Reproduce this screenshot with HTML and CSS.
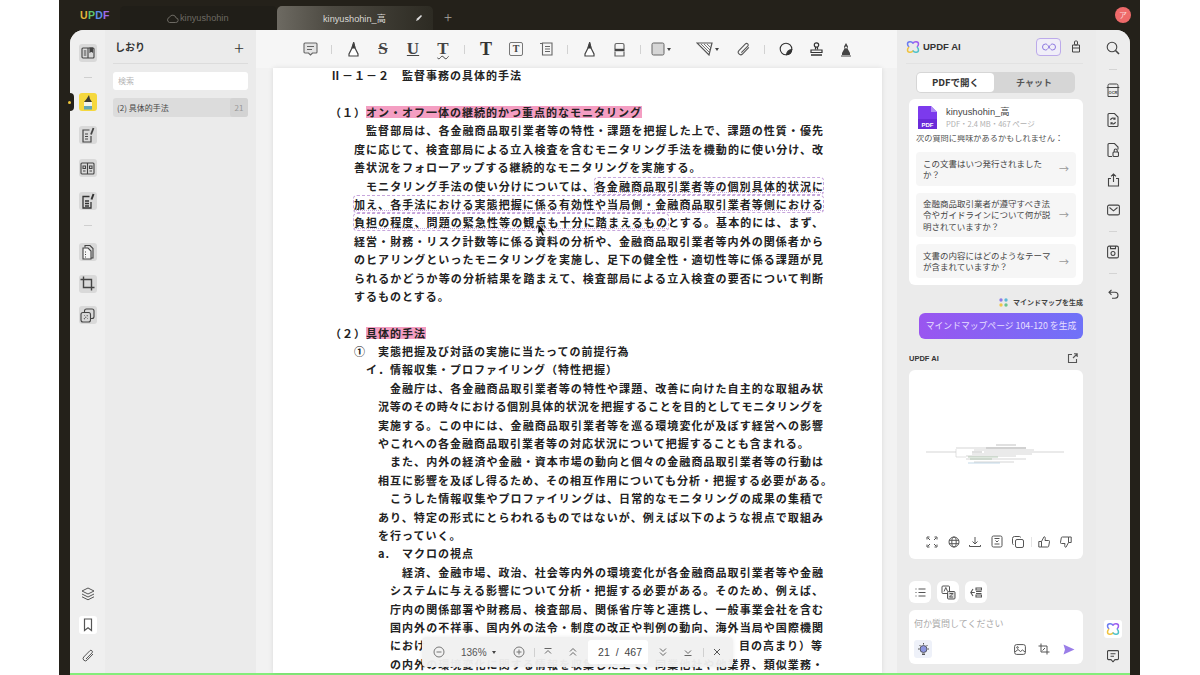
FILE: index.html
```html
<!DOCTYPE html>
<html lang="ja">
<head>
  <meta charset="UTF-8">
  <title>UPDF</title>
  <link rel="stylesheet" href="styles.css">
</head>
<body>
<div class="window">

  <div class="titlebar">
    <div class="logo"><span class="l-u">U</span><span class="l-p">P</span><span class="l-d">D</span><span class="l-f">F</span></div>
    <div class="tab tab-off">
      <svg width="13" height="11" viewBox="0 0 13 11" fill="none" stroke="#6d6a63" stroke-width="1"><path d="M3.5 9.5h6.2a2.3 2.3 0 0 0 .3-4.6A3.4 3.4 0 0 0 3.500 4.300 2.700 2.700 0 0 0 3.500 9.500z"/></svg>
      <span>kinyushohin</span>
    </div>
    <div class="tab tab-on">
      <span>kinyushohin_高</span>
      <svg class="tab-pen" width="8" height="8" viewBox="0 0 8 8"><path d="M1 7l1-2.500L6 1l1 1-3.500 4z" fill="#ddd"/></svg>
    </div>
    <div class="tab-add">+</div>
    <div class="avatar">ア</div>
  </div>

  <div class="main">

    <div class="rail">
      <div class="notch"><i></i></div>
      <div class="rail-top">
        <div class="rbtn on"><svg width="14" height="14" viewBox="0 0 14 14" fill="none" stroke="#444" stroke-width="1.100"><rect x="1" y="2" width="12" height="10" rx="1"/><path d="M7 2v10M2.800 5h2.500M2.800 7h2.500M2.800 9h2.500"/><path d="M9 2h2.500v4L10.200 5 9 6z" fill="#444"/></svg></div>
        <div class="rsep"></div>
        <div class="rbtn yellow"><svg width="14" height="16" viewBox="0 0 14 16"><path d="M5.500 5L8 1l1 4 2 3H3z" fill="#3a3a33"/><rect x="3" y="8" width="8" height="4" fill="#f4f4ea"/><rect x="3" y="12" width="8" height="3.500" fill="#62a6b8"/></svg></div>
        <div class="rbtn on"><svg width="14" height="16" viewBox="0 0 14 16" fill="none" stroke="#444" stroke-width="1.200"><path d="M8.500 3H2v12h8V9"/><path d="M4 7h3M4 9.500h3M4 12h3"/><path d="M12.500 1L10 7.500" stroke-width="1.800"/></svg></div>
        <div class="rbtn on"><svg width="15" height="13" viewBox="0 0 15 13" fill="none" stroke="#444" stroke-width="1.100"><rect x="1" y="1" width="13" height="11" rx="1"/><path d="M7.500 1v11M3 4h2.500v2.500H3zM9.500 4H12v2.500H9.500zM3 9h2.500M9.500 9H12"/></svg></div>
        <div class="rbtn on"><svg width="14" height="16" viewBox="0 0 14 16" fill="none" stroke="#333" stroke-width="1.300"><path d="M8.500 3.500H2V15h8V9"/><path d="M4 8h4M4 10.500h4M4 13h4" stroke-width="1.600"/><path d="M12.500 1L10.500 6.500" stroke-width="2"/></svg></div>
        <div class="rsep"></div>
      </div>
      <div class="rail-mid">
        <div class="rbtn on"><svg width="14" height="16" viewBox="0 0 14 16" fill="none" stroke="#444" stroke-width="1.100"><path d="M4 3.500V1.500h5l3 3V14h-2"/><path d="M2 4h5l3 3v8H2z" fill="#f6f6f6"/><path d="M4 8h1M4 10.500h1M4 13h1"/></svg></div>
        <div class="rbtn on"><svg width="15" height="15" viewBox="0 0 15 15" fill="none" stroke="#444" stroke-width="1.400"><path d="M3.500 0.500V11.500H14.500"/><path d="M0.500 3.500H11.500V14.500"/></svg></div>
        <div class="rbtn on"><svg width="15" height="15" viewBox="0 0 15 15" fill="none" stroke="#444" stroke-width="1.100"><rect x="4.500" y="1" width="9.500" height="9.500" rx="2"/><rect x="1" y="4.500" width="9.500" height="9.500" rx="2" fill="#d8d8d8"/><path d="M4 11l4-4M4.500 7.500h.5M7.500 10.500h.5" stroke-dasharray="1 1"/></svg></div>
      </div>
      <div class="rail-bottom">
        <div class="rbtn"><svg width="14" height="14" viewBox="0 0 14 14" fill="none" stroke="#555" stroke-width="1"><path d="M7 1l6 3-6 3-6-3z"/><path d="M1 7l6 3 6-3M1 9.800l6 3 6-3"/></svg></div>
        <div class="rbtn white"><svg width="10" height="14" viewBox="0 0 10 14" fill="none" stroke="#555" stroke-width="1.200"><path d="M1.500 1h7v11.500L5 9.800 1.500 12.500z"/></svg></div>
        <div class="rbtn"><svg width="14" height="14" viewBox="0 0 14 14" fill="none" stroke="#555" stroke-width="1"><path d="M12 5L6 11.200a2.300 2.300 0 0 1-3.300-3.200L8.800 1.800a1.500 1.500 0 0 1 2.200 2.100L5 10"/></svg></div>
      </div>
    </div>

    <div class="marks">
      <div class="marks-head"><span>しおり</span><b>+</b></div>
      <div class="marks-search">検索</div>
      <div class="marks-row"><span>(2) 具体的手法</span><em>21</em></div>
    </div>

    <div class="doc">
      <div class="toolbar">
        <div class="tool"><svg width="15" height="14" viewBox="0 0 15 14" fill="none" stroke="#666" stroke-width="1.100"><path d="M2 1h11a1 1 0 0 1 1 1v8a1 1 0 0 1-1 1H9.500L7.500 13 5.500 11H2a1 1 0 0 1-1-1V2a1 1 0 0 1 1-1z" fill="#e4e4e4"/><path d="M4 4.500h7M4 7.500h5"/></svg></div>
        <div class="tsep"></div>
        <div class="tool"><svg width="13" height="15" viewBox="0 0 13 15" fill="none" stroke="#444" stroke-width="1.200"><path d="M6.500 1L8 6l3 6v2H2v-2l3-6z" fill="#fff"/><path d="M5 6L6.800 1 8 6z" fill="#333"/></svg></div>
        <div class="tool tletter strike">S</div>
        <div class="tool tletter under">U</div>
        <div class="tool tletter wave">T</div>
        <div class="tsep"></div>
        <div class="tool tletter big">T</div>
        <div class="tool"><span class="boxt">T</span></div>
        <div class="tool"><svg width="14" height="14" viewBox="0 0 14 14" fill="none" stroke="#666" stroke-width="1.100"><path d="M1 1.500h2.500M3.500 1h9.500v12H3.500zM6 4.500h5M6 7h5M6 9.500h5"/></svg></div>
        <div class="tsep"></div>
        <div class="tool"><svg width="13" height="15" viewBox="0 0 13 15" fill="none" stroke="#444" stroke-width="1.200"><path d="M6.500 1L8 6l3 6v2H2v-2l3-6z" fill="#fff"/><path d="M5 6L6.800 1 8 6z" fill="#333"/></svg></div>
        <div class="tool"><svg width="11" height="15" viewBox="0 0 11 15" fill="none" stroke="#666" stroke-width="1.200"><path d="M1 7V3a1.500 1.500 0 0 1 1.500-1.500h6A1.500 1.500 0 0 1 10 3v4"/><path d="M.5 8h10" stroke-width="2.400" stroke="#444"/><path d="M1 9.500V14h9V9.500"/></svg></div>
        <div class="tsep"></div>
        <div class="tool tool-rect"><svg width="14" height="14" viewBox="0 0 14 14"><rect x="1" y="1" width="12" height="12" rx="1.500" fill="#d6d6d6" stroke="#666"/></svg><i class="caret"></i></div>
        <div class="tool tool-poly"><svg width="18" height="14" viewBox="0 0 18 14" fill="none" stroke="#555" stroke-width="1.200"><path d="M1 1h15l-3 12z"/><path d="M5 2l8 8M8 2l6 6M11 2l4 4" stroke-width=".8"/></svg><i class="caret"></i></div>
        <div class="tool"><svg width="15" height="15" viewBox="0 0 14 14" fill="none" stroke="#555" stroke-width="1"><path d="M12 5L6 11.200a2.300 2.300 0 0 1-3.300-3.200L8.800 1.800a1.500 1.500 0 0 1 2.200 2.100L5 10"/></svg></div>
        <div class="tsep"></div>
        <div class="tool"><svg width="14" height="14" viewBox="0 0 14 14" fill="none" stroke="#333" stroke-width="1.100"><circle cx="7" cy="7" r="5.800"/><path d="M12.800 7.500A5.800 5.800 0 0 1 7.500 12.800C7.800 9.800 9.800 7.800 12.800 7.500z" fill="#333"/></svg></div>
        <div class="tool"><svg width="13" height="14" viewBox="0 0 13 14" fill="none" stroke="#333" stroke-width="1.200"><circle cx="6.500" cy="3" r="2.200"/><path d="M5.500 5v2.500M7.500 5v2.500"/><path d="M1 8h11v2.500H1z"/><path d="M1 13h11" stroke-width="1.500"/></svg></div>
        <div class="tool"><svg width="12" height="15" viewBox="0 0 12 15"><path d="M6 1l2 3.500-.5 2 2.500 4.500v2H2v-2l2.500-4.500-.5-2z" fill="#444"/><circle cx="6" cy="5.500" r="1" fill="#f6f6f6"/><path d="M1 14h10" stroke="#444"/></svg></div>
      </div>

      <div class="page">
        <div class="ln title">Ⅱ－１－２　監督事務の具体的手法</div>
        <div class="ln">（１）<span class="mark">オン・オフ一体の継続的かつ重点的なモニタリング</span></div>
        <div class="ln in3 j">監督部局は、各金融商品取引業者等の特性・課題を把握した上で、課題の性質・優先</div>
        <div class="ln in2 j">度に応じて、検査部局による立入検査を含むモニタリング手法を機動的に使い分け、改</div>
        <div class="ln in2">善状況をフォローアップする継続的なモニタリングを実施する。</div>
        <div class="ln in3 j">モニタリング手法の使い分けについては、<span class="sel">各金融商品取引業者等の個別具体的状況に</span></div>
        <div class="ln in2 j"><span class="sel">加え、各手法における実態把握に係る有効性や当局側・金融商品取引業者等側における</span></div>
        <div class="ln in2 j"><span class="sel">負担の程度、問題の緊急性等の観点も十分に踏まえるもの</span>とする。基本的には、まず、</div>
        <div class="ln in2 j">経営・財務・リスク計数等に係る資料の分析や、金融商品取引業者等内外の関係者から</div>
        <div class="ln in2 j">のヒアリングといったモニタリングを実施し、足下の健全性・適切性等に係る課題が見</div>
        <div class="ln in2 j">られるかどうか等の分析結果を踏まえて、検査部局による立入検査の要否について判断</div>
        <div class="ln in2">するものとする。</div>
        <div class="ln">&nbsp;</div>
        <div class="ln">（２）<span class="mark">具体的手法</span></div>
        <div class="ln in2">①　実態把握及び対話の実施に当たっての前提行為</div>
        <div class="ln in3">イ．情報収集・プロファイリング（特性把握）</div>
        <div class="ln in5 j">金融庁は、各金融商品取引業者等の特性や課題、改善に向けた自主的な取組み状</div>
        <div class="ln in4 j">況等のその時々における個別具体的状況を把握することを目的としてモニタリングを</div>
        <div class="ln in4 j">実施する。この中には、金融商品取引業者等を巡る環境変化が及ぼす経営への影響</div>
        <div class="ln in4">やこれへの各金融商品取引業者等の対応状況について把握することも含まれる。</div>
        <div class="ln in5 j">また、内外の経済や金融・資本市場の動向と個々の金融商品取引業者等の行動は</div>
        <div class="ln in4">相互に影響を及ぼし得るため、その相互作用についても分析・把握する必要がある。</div>
        <div class="ln in5 j">こうした情報収集やプロファイリングは、日常的なモニタリングの成果の集積で</div>
        <div class="ln in4 j">あり、特定の形式にとらわれるものではないが、例えば以下のような視点で取組み</div>
        <div class="ln in4">を行っていく。</div>
        <div class="ln in4"><span class="bullet">a.</span>マクロの視点</div>
        <div class="ln in6 j">経済、金融市場、政治、社会等内外の環境変化が各金融商品取引業者等や金融</div>
        <div class="ln in5 j">システムに与える影響について分析・把握する必要がある。そのため、例えば、</div>
        <div class="ln in5 j">庁内の関係部署や財務局、検査部局、関係省庁等と連携し、一般事業会社を含む</div>
        <div class="ln in5 j">国内外の不祥事、国内外の法令・制度の改正や判例の動向、海外当局や国際機関</div>
        <div class="ln in5 split"><span>におけ</span><span>目の高まり）等</span></div>
        <div class="ln in5 j">の内外の環境変化に関する情報を収集した上で、同業他社や他業界、類似業務・</div>
      </div>

      <svg class="cursor" width="10" height="14" viewBox="0 0 10 14"><path d="M1 1v10l2.500-2.200L5.500 13l1.800-.8-2-4H8.500z" fill="#111" stroke="#fff" stroke-width=".6"/></svg>

      <div class="zoombar">
        <svg class="zb-a" width="12" height="12" viewBox="0 0 12 12" fill="none" stroke="#777"><circle cx="6" cy="6" r="5"/><path d="M3.500 6h5"/></svg>
        <span class="zb-pct">136%</span><i class="caret"></i>
        <svg class="zb-plus" width="12" height="12" viewBox="0 0 12 12" fill="none" stroke="#777"><circle cx="6" cy="6" r="5"/><path d="M3.500 6h5M6 3.500v5"/></svg>
        <span class="zb-sep"></span>
        <svg class="zb-i" width="10" height="10" viewBox="0 0 10 10" fill="none" stroke="#666"><path d="M1.500 1.500h7M2 6.500l3-3 3 3"/></svg>
        <svg class="zb-i" width="10" height="10" viewBox="0 0 10 10" fill="none" stroke="#666"><path d="M2 4.500l3-3 3 3M2 8.500l3-3 3 3"/></svg>
        <div class="zb-page"><span>21</span><span>/</span><span>467</span></div>
        <svg class="zb-i" width="10" height="10" viewBox="0 0 10 10" fill="none" stroke="#666"><path d="M2 1.500l3 3 3-3M2 5.500l3 3 3-3"/></svg>
        <svg class="zb-i" width="10" height="10" viewBox="0 0 10 10" fill="none" stroke="#666"><path d="M2 3.500l3 3 3-3M1.500 8.500h7"/></svg>
        <span class="zb-sep"></span>
        <svg class="zb-i" width="10" height="10" viewBox="0 0 10 10" fill="none" stroke="#555"><path d="M2 2l6 6M8 2l-6 6"/></svg>
      </div>
    </div>

    <div class="ai">
      <div class="ai-head">
        <svg width="14" height="14" viewBox="0 0 14 14" fill="none" stroke-width="1.500"><path d="M7 3.500C6 1 1.500 1 1.500 4c0 1.500 1 2.500 1.500 3" stroke="#6b7cf0"/><path d="M7 3.500C8 1 12.500 1 12.500 4c0 1.500-1 2.500-1.500 3" stroke="#9a5cf0"/><path d="M3 7c-.5.500-1.500 1.500-1.500 3 0 3 4.500 3 5.500.500" stroke="#f0c23c"/><path d="M11 7c.5.500 1.500 1.500 1.500 3 0 3-4.500 3-5.500.500" stroke="#4cc0c8"/></svg>
        <span class="ai-name">UPDF AI</span>
        <div class="ai-inf"><svg width="14" height="8" viewBox="0 0 14 8" fill="none" stroke="#8d78e0"><path d="M7 4C5.500 1.500 4.500 1 3.500 1a3 3 0 0 0 0 6C4.500 7 5.500 6.500 7 4c1.500-2.500 2.500-3 3.500-3a3 3 0 0 1 0 6C9.500 7 8.500 6.500 7 4z"/></svg></div>
        <svg class="ai-brush" width="10" height="13" viewBox="0 0 10 13" fill="none" stroke="#444"><rect x="3.500" y="1" width="3" height="4" rx="1"/><path d="M1.500 5h7v7h-7zM1.500 8h7"/></svg>
      </div>

      <div class="seg"><div class="seg-on">PDFで開く</div><div class="seg-off">チャット</div></div>

      <div class="file">
        <svg width="19" height="23" viewBox="0 0 19 23"><path d="M0 1a1 1 0 0 1 1-1h12l6 6v10H0z" fill="#7c3aed"/><path d="M13 0l6 6h-6z" fill="#b08cf5"/><rect y="13" width="19" height="10" fill="#6a2bd9"/><text x="9.500" y="21" text-anchor="middle" class="pdf-tag">PDF</text></svg>
        <div><div class="file-name">kinyushohin_高</div><div class="file-meta">PDF・2.4 MB・467 ページ</div></div>
      </div>

      <div class="qs">
        <div class="qs-lead">次の質問に興味があるかもしれません：</div>
        <div class="q"><span>この文書はいつ発行されました<br>か？</span><b>→</b></div>
        <div class="q"><span>金融商品取引業者が遵守すべき法<br>令やガイドラインについて何が説<br>明されていますか？</span><b>→</b></div>
        <div class="q"><span>文書の内容にはどのようなテーマ<br>が含まれていますか？</span><b>→</b></div>
      </div>

      <div class="mm-label">
        <svg width="9" height="9" viewBox="0 0 9 9"><circle cx="2" cy="2" r="1.700" fill="#8d7be8"/><circle cx="7" cy="2" r="1.700" fill="#5cb8d8"/><circle cx="2" cy="7" r="1.700" fill="#f0c84c"/><circle cx="7" cy="7" r="1.700" fill="#6cc48c"/></svg>
        <span>マインドマップを生成</span>
      </div>
      <div class="mm-btn">マインドマップページ 104-120 を生成</div>

      <div class="res-head"><span>UPDF AI</span><svg width="11" height="11" viewBox="0 0 11 11" fill="none" stroke="#555" stroke-width="1.100"><path d="M5 1.500H1.500v8h8V6M6 5l4-4M7 .8h3.200V4"/></svg></div>

      <div class="res">
        <svg class="mm-thumb" width="140" height="24" viewBox="0 0 140 24" fill="none" stroke-width=".6">
          <path d="M0 10h30M30 6h70M48 8h60M58 10h80M46 12h60M40 14h50M40 17h60M48 20h40" stroke="#bbb"/>
          <path d="M70 3h20M60 6h40M46 10h10" stroke="#999"/>
          <path d="M42 15h30M44 17h22" stroke="#8fb08f"/>
          <path d="M42 21h32" stroke="#9cc0d8"/>
          <path d="M30 7v8h10" stroke="#ccc"/>
        </svg>
        <div class="res-icons">
          <svg width="12" height="12" viewBox="0 0 12 12" fill="none" stroke="#555"><path d="M1 3.500V1h2.500M11 3.500V1H8.500M1 8.500V11h2.500M11 8.500V11H8.500M4 4L2 2M8 4l2-2M4 8l-2 2M8 8l2 2" /></svg>
          <svg width="12" height="12" viewBox="0 0 12 12" fill="none" stroke="#555"><circle cx="6" cy="6" r="5"/><ellipse cx="6" cy="6" rx="2.200" ry="5"/><path d="M1 4.300h10M1 7.700h10"/></svg>
          <svg width="12" height="12" viewBox="0 0 12 12" fill="none" stroke="#555"><path d="M6 1v6.500M3.500 5.500L6 8l2.500-2.500M.5 9v1.500h11V9"/></svg>
          <svg width="12" height="13" viewBox="0 0 12 13" fill="none" stroke="#555"><rect x="1" y="1" width="10" height="11" rx="1.500"/><path d="M3.500 3.500h5M4.500 5.500l1.500 1.500 1.500-1.500M3.500 9h5"/></svg>
          <svg width="12" height="12" viewBox="0 0 12 12" fill="none" stroke="#555"><rect x="3.500" y="3.500" width="8" height="8" rx="1.500"/><path d="M8.500 1.500A1 1 0 0 0 7.500.5h-5a2 2 0 0 0-2 2v5a1 1 0 0 0 1 1"/></svg>
          <span class="res-sep"></span>
          <svg width="12" height="12" viewBox="0 0 12 12" fill="none" stroke="#555"><path d="M3.500 5.500L6 .8c1 0 1.500.7 1.300 1.700L7 4.500h3.500a1 1 0 0 1 1 1.200l-.8 4.500a1 1 0 0 1-1 .8H3.500zM3.500 5.500H.8v5.500h2.700"/></svg>
          <svg width="12" height="12" viewBox="0 0 12 12" fill="none" stroke="#555"><path d="M8.500 6.500L6 11.200c-1 0-1.500-.7-1.300-1.700L5 7.500H1.500a1 1 0 0 1-1-1.200l.8-4.500a1 1 0 0 1 1-.8h6.200zM8.500 6.500h2.700V1H8.500"/></svg>
        </div>
      </div>

      <div class="chips">
        <div class="chip"><svg width="11" height="9" viewBox="0 0 11 9" fill="none" stroke="#555" stroke-width="1.100"><path d="M3.500 1h7M3.500 4.500h7M3.500 8h7M.5 1h1M.5 4.500h1M.5 8h1"/></svg></div>
        <div class="chip"><svg width="15" height="15" viewBox="0 0 15 15" fill="none" stroke="#555"><rect x="1" y="1" width="7.500" height="7.500" rx="1"/><rect x="6.500" y="6.500" width="7.500" height="7.500" rx="1" fill="#ddd"/><path d="M3 6.500l1.800-4 1.800 4M8.500 8.500h3.500l-3.500 3.500h3.500"/></svg></div>
        <div class="chip"><svg width="12" height="11" viewBox="0 0 12 11" fill="none" stroke="#555" stroke-width="1.100"><path d="M3 2L.8 5.500 3 9M.8 5.500h4M6 1h5.500v2H6zM6 4.500h5.500M6 6.500h5.500M6 8h5.500v2H6z"/></svg></div>
      </div>

      <div class="ask">
        <div class="ask-ph">何か質問してください</div>
        <div class="ask-bar">
          <div class="bulb"><svg width="13" height="15" viewBox="0 0 13 15" fill="none"><circle cx="6.500" cy="7" r="3.500" fill="#8b95e0" stroke="#444" stroke-width=".8"/><path d="M5 11.500h3v1.500H5z" fill="#555"/><path d="M6.500 1v1.500M1 7h1.500M12 7h-1.500M2.500 3l1 1M10.500 3l-1 1" stroke="#555"/></svg></div>
          <svg class="ask-img" width="12" height="11" viewBox="0 0 12 11" fill="none" stroke="#555"><rect x=".6" y=".6" width="10.800" height="9.800" rx="2"/><path d="M1 8l3-2.500 2.500 2 2-1.500 2.500 2"/><circle cx="3.500" cy="3.500" r=".8"/></svg>
          <svg class="ask-crop" width="12" height="12" viewBox="0 0 12 12" fill="none" stroke="#555"><path d="M3 .5V9h8.500M.5 3H9v8.500"/><path d="M4.500 7.500l2.500-2.500"/></svg>
          <svg class="ask-send" width="12" height="11" viewBox="0 0 12 11"><path d="M.5.500L11.500 5.500.5 10.500 2 5.500z" fill="#9a7ee8"/></svg>
        </div>
      </div>
    </div>

    <div class="rrail">
      <svg class="rr" width="14" height="14" viewBox="0 0 14 14" fill="none" stroke="#444" stroke-width="1.100"><circle cx="6" cy="6" r="4.800"/><path d="M9.500 9.500l3.500 3.500" stroke-width="1.600"/></svg>
      <div class="rr-sep"></div>
      <svg class="rr" width="14" height="14" viewBox="0 0 14 14" fill="none" stroke="#444"><path d="M2 4.500V2.500A1.500 1.500 0 0 1 3.500 1h7A1.500 1.500 0 0 1 12 2.500v2M.7 4.500h12.600M2 5v8.500h10V5"/><text x="7" y="10.500" text-anchor="middle" class="ocr">OCR</text></svg>
      <svg class="rr" width="12" height="15" viewBox="0 0 12 15" fill="none" stroke="#444" stroke-width="1.100"><path d="M1 2a1 1 0 0 1 1-1h5.500L11 4.500V13a1 1 0 0 1-1 1H2a1 1 0 0 1-1-1z"/><path d="M3.500 7.500a2.600 2.600 0 0 1 4.500-1M8.500 9.500a2.600 2.600 0 0 1-4.500 1M8 5v1.800H6.300M4 12v-1.800h1.700"/></svg>
      <svg class="rr" width="12" height="15" viewBox="0 0 12 15" fill="none" stroke="#444" stroke-width="1.100"><path d="M5 14H2a1 1 0 0 1-1-1V2a1 1 0 0 1 1-1h5.500L11 4.500V7"/><rect x="6" y="9.500" width="5.500" height="4.500" rx="1"/><path d="M7.200 9.500V8a1.500 1.500 0 0 1 3 0v1.500"/></svg>
      <svg class="rr" width="13" height="14" viewBox="0 0 13 14" fill="none" stroke="#444" stroke-width="1.100"><path d="M4 5.500H1.500V13h10V5.500H9M6.500 9V1M4 3.300L6.500 1 9 3.300"/></svg>
      <svg class="rr" width="13" height="11" viewBox="0 0 13 11" fill="none" stroke="#444" stroke-width="1.100"><rect x=".6" y=".6" width="11.800" height="9.800" rx="1.500"/><path d="M2.500 3l4 3.300 4-3.300"/></svg>
      <div class="rr-sep"></div>
      <svg class="rr" width="12" height="13" viewBox="0 0 12 13" fill="none" stroke="#444" stroke-width="1.100"><rect x=".6" y=".6" width="10.800" height="11.800" rx="1.500"/><path d="M3.500.6v2.500h5V.6"/><circle cx="6" cy="8" r="2"/></svg>
      <div class="rr-sep"></div>
      <svg class="rr" width="11" height="10" viewBox="0 0 11 10" fill="none" stroke="#444" stroke-width="1.100"><path d="M3.500.8L1 3.300l2.500 2.500M1 3.300h6a3 3 0 0 1 0 6H4"/></svg>
      <div class="rr-bottom">
        <div class="rr-logo"><svg width="14" height="14" viewBox="0 0 14 14" fill="none" stroke-width="1.500"><path d="M7 3.500C6 1 1.500 1 1.500 4c0 1.500 1 2.500 1.500 3" stroke="#6b7cf0"/><path d="M7 3.500C8 1 12.500 1 12.500 4c0 1.500-1 2.500-1.500 3" stroke="#9a5cf0"/><path d="M3 7c-.5.500-1.500 1.500-1.500 3 0 3 4.500 3 5.500.500" stroke="#f0c23c"/><path d="M11 7c.5.500 1.500 1.500 1.500 3 0 3-4.500 3-5.500.500" stroke="#4cc0c8"/></svg></div>
        <svg width="12" height="13" viewBox="0 0 12 13" fill="none" stroke="#444" stroke-width="1.100"><path d="M1.500.6h9a1 1 0 0 1 1 1v7a1 1 0 0 1-1 1H8L6 11.800 4 9.600H1.500a1 1 0 0 1-1-1v-7a1 1 0 0 1 1-1z"/><path d="M3.500 3.800h5M3.500 6.300h3.500"/></svg>
      </div>
    </div>

  </div>
</div>
</body>
</html>
```
FILE: styles.css
```css
* {
  box-sizing: border-box;
}

body {
  margin: 0;
  height: 675px;
  overflow: hidden;
  background: #fff;
  font-family: "Noto Sans CJK JP", "Noto Sans", sans-serif;
  color: #333;
}

.window {
  width: 1081px;
  height: 675px;
  margin-left: 59px;
  padding: 0 10px 0 11px;
  background: #24211a;
}

/* title bar */
.titlebar {
  display: flex;
  align-items: flex-end;
  height: 30px;
  position: relative;
}

.logo {
  width: 50px;
  align-self: center;
  padding-left: 10px;
  font-family: "Liberation Sans", sans-serif;
  font-weight: 700;
  font-size: 10.500px;
  letter-spacing: .3px;
}

.l-u { color: #e3b73c; }
.l-p { color: #5fc46f; }
.l-d { color: #5d8fe8; }
.l-f { color: #a06be8; }

.tab {
  display: flex;
  align-items: center;
  height: 24px;
  font-family: "Liberation Sans", "Noto Sans CJK JP", sans-serif;
  font-size: 9.200px;
  border-radius: 5px 5px 0 0;
}

.tab-off {
  width: 157px;
  padding-left: 46px;
  gap: 1px;
  color: #6d6a63;
  background: #201e18;
}

.tab-on {
  width: 156px;
  padding-left: 46px;
  color: #d9d8d4;
  background: linear-gradient(90deg, #6d6a62 0%, #4c4941 35%, #2d2b23 100%);
}

.tab-on span {
  width: 92px;
}

.tab-add {
  align-self: center;
  margin: 3px 0 0 11px;
  font-size: 15px;
  font-weight: 300;
  color: #a8a69f;
}

.avatar {
  position: absolute;
  right: -1px;
  top: 7px;
  width: 16px;
  height: 16px;
  border-radius: 50%;
  background: #ee6a6a;
  color: #fbd5d5;
  font-size: 8px;
  line-height: 16px;
  text-align: center;
}

/* main panel */
.main {
  display: flex;
  height: 645px;
  background: #ececec;
  border-radius: 14px 14px 0 0;
  border-bottom: 2px solid #84ec7a;
}

/* left rail */
.rail {
  position: relative;
  display: flex;
  flex-direction: column;
  align-items: center;
  flex: none;
  width: 35px;
  padding-top: 14px;
  border-radius: 14px 0 0 0;
  background: #efefef;
}

.notch {
  position: absolute;
  left: 0;
  top: 63px;
  width: 4px;
  height: 18px;
  border-radius: 0 8px 8px 0;
  background: #24211a;
}

.notch i {
  position: absolute;
  left: -2.500px;
  top: 7.500px;
  width: 3px;
  height: 3px;
  border-radius: 50%;
  background: #efc63b;
}

.rail-top,
.rail-mid,
.rail-bottom {
  display: flex;
  flex-direction: column;
  align-items: center;
}

.rail-top { gap: 15px; }

.rail-mid {
  gap: 13.500px;
  margin-top: 17px;
}

.rail-bottom {
  gap: 13px;
  margin-top: auto;
  padding-bottom: 8px;
}

.rbtn {
  display: flex;
  align-items: center;
  justify-content: center;
  width: 18px;
  height: 18px;
  border-radius: 3px;
}

.rbtn.on { background: #d9d9d9; }
.rbtn.yellow { background: #f5d83e; }
.rbtn.white { background: #fff; }

.rsep {
  width: 8px;
  height: 1px;
  background: #cfcfcf;
}

/* bookmarks panel */
.marks {
  flex: none;
  width: 151px;
  padding: 0 8px;
  background: #ebebeb;
}

.marks-head {
  display: flex;
  align-items: center;
  justify-content: space-between;
  height: 34px;
  padding: 0 4px 0 2px;
  border-bottom: 1px solid #dcdcdc;
  font-size: 10px;
  font-weight: 700;
}

.marks-head b {
  font-size: 18px;
  font-weight: 300;
}

.marks-search {
  height: 18px;
  margin-top: 8px;
  padding-left: 5px;
  border-radius: 3px;
  background: #fff;
  color: #b5b5b5;
  font-size: 8px;
  line-height: 18px;
}

.marks-row {
  display: flex;
  align-items: center;
  justify-content: space-between;
  height: 19px;
  margin-top: 8px;
  padding-left: 4px;
  border-radius: 3px;
  background: #dcdcdc;
  font-size: 8px;
  color: #444;
}

.marks-row em {
  width: 18px;
  height: 19px;
  border-radius: 3px;
  background: #d3d3d3;
  color: #999;
  font-style: normal;
  line-height: 19px;
  text-align: center;
}

/* document */
.doc {
  position: relative;
  flex: none;
  width: 641px;
  background: #f2f2f2;
}

.toolbar {
  display: flex;
  align-items: center;
  height: 38px;
  padding-left: 39px;
  background: #f6f6f6;
}

.tool {
  display: flex;
  align-items: center;
  justify-content: center;
  flex: none;
  width: 30px;
  height: 20px;
}

.tool-rect {
  width: 36px;
  justify-content: flex-start;
  padding-left: 4px;
  gap: 2px;
}

.tool-poly {
  width: 45px;
  justify-content: flex-start;
  padding-left: 13px;
  gap: 1px;
}

.tsep {
  flex: none;
  width: 1px;
  height: 9px;
  margin: 0 6px;
  background: #d2d2d2;
}

.caret {
  display: inline-block;
  width: 0;
  height: 0;
  border-left: 2.500px solid transparent;
  border-right: 2.500px solid transparent;
  border-top: 3px solid #444;
}

.tletter {
  font-family: "Liberation Serif", serif;
  font-weight: 700;
  font-size: 17px;
  color: #444;
}

.strike { text-decoration: line-through; }
.under { text-decoration: underline; }
.wave { text-decoration: underline; text-decoration-style: wavy; text-decoration-thickness: 1px; }
.big { font-size: 18px; color: #333; }

.boxt {
  width: 14px;
  height: 14px;
  border: 1px solid #777;
  border-radius: 2px;
  font-family: "Liberation Serif", serif;
  font-weight: 700;
  font-size: 10px;
  line-height: 12px;
  text-align: center;
  color: #444;
}

.page {
  width: 609px;
  height: 605px;
  margin-left: 17px;
  padding-left: 57px;
  overflow: hidden;
  background: #fff;
  box-shadow: 0 0 5px rgba(0, 0, 0, .1);
}

.ln {
  height: 18.400px;
  line-height: 18.400px;
  white-space: nowrap;
  font-size: 11px;
  font-weight: 700;
  letter-spacing: 1px;
  color: #222;
}

.j {
  padding-right: 59px;
  letter-spacing: 0;
  white-space: normal;
  overflow: visible;
  text-align-last: justify;
}

.split {
  display: flex;
  justify-content: space-between;
  padding-right: 59px;
}

.title {
  height: 14px;
  line-height: 14px;
  margin-bottom: 21px;
}

.in2 { padding-left: 24px; }
.in3 { padding-left: 36px; }
.in4 { padding-left: 48px; }
.in5 { padding-left: 60px; }
.in6 { padding-left: 72px; }

.bullet {
  display: inline-block;
  width: 24px;
}

.mark {
  background: linear-gradient(transparent 12%, #f49ec2 12%, #f49ec2 90%, transparent 90%);
}

.sel {
  outline: 1px dashed #c7a6dc;
  border-radius: 3px;
  text-decoration: underline dotted #c7a6dc;
}

.cursor {
  position: absolute;
  left: 281px;
  top: 193px;
}

.zoombar {
  position: absolute;
  left: 166px;
  bottom: 6px;
  display: flex;
  align-items: center;
  width: 311px;
  height: 30px;
  padding-left: 11px;
  border-radius: 4px;
  background: rgba(240, 240, 240, .96);
  box-shadow: 0 0 4px rgba(0, 0, 0, .08);
  font-family: "Liberation Sans", sans-serif;
  font-size: 10px;
  color: #555;
}

.zb-pct { margin: 0 5px 0 16px; }
.zb-plus { margin: 0 7px 0 17px; }

.zb-sep {
  width: 1px;
  height: 9px;
  margin: 0 1px 0 2px;
  background: #d0d0d0;
}

.zb-i {
  margin: 0 7.500px;
}

.zb-page {
  display: flex;
  align-items: center;
  justify-content: space-between;
  width: 60px;
  height: 24px;
  margin: 0 2.500px;
  padding: 0 6px 0 10px;
  border-radius: 3px;
  background: #fff;
  font-size: 10.500px;
  color: #444;
}

/* AI panel */
.ai {
  flex: none;
  width: 199px;
  padding: 0 13px 0 12px;
  background: #ebebeb;
}

.ai-head {
  display: flex;
  align-items: center;
  height: 34px;
  margin-left: -3px;
  border-bottom: 1px solid #e2e2e2;
}

.ai-name {
  width: 113px;
  margin-left: 3px;
  font-family: "Liberation Sans", sans-serif;
  font-size: 9.500px;
  font-weight: 700;
}

.ai-inf {
  display: flex;
  align-items: center;
  justify-content: center;
  width: 25px;
  height: 18px;
  border: 1px solid #bcaaea;
  border-radius: 4px;
  background: #f0eef8;
}

.ai-brush { margin-left: 10px; }

.seg {
  display: flex;
  width: 159px;
  height: 21px;
  margin: 8px 0 6px 7px;
  padding: 1px;
  border-radius: 5px;
  background: #d6d6d6;
  font-size: 9px;
  font-weight: 700;
  line-height: 19px;
  text-align: center;
}

.seg-on {
  width: 77px;
  border-radius: 4px;
  background: #fff;
  font-size: 9.500px;
}

.seg-off {
  flex: 1;
  color: #555;
}

.file {
  position: relative;
  display: flex;
  align-items: center;
  gap: 9px;
  width: 174px;
  height: 36px;
  padding-left: 9px;
  border-radius: 6px;
  background: #fff;
}

.pdf-tag {
  font-family: "Liberation Sans", sans-serif;
  font-size: 6px;
  font-weight: 700;
  fill: #fff;
}

.file-name {
  font-family: "Liberation Sans", "Noto Sans CJK JP", sans-serif;
  font-size: 9.300px;
  line-height: 12px;
  color: #444;
}

.file-meta {
  font-size: 7.500px;
  line-height: 11px;
  color: #b0b0b0;
}

.qs {
  width: 174px;
  height: 155px;
  margin-top: -5px;
  padding: 2px 7px 0;
  border-radius: 0 0 6px 6px;
  background: #fff;
}

.qs-lead {
  height: 12px;
  margin-bottom: 8px;
  font-size: 8.200px;
  line-height: 11px;
  white-space: nowrap;
  color: #555;
}

.q {
  display: flex;
  align-items: center;
  justify-content: space-between;
  margin-bottom: 7px;
  padding: 5.500px 7px;
  border-radius: 4px;
  background: #f6f6f6;
  font-size: 8.500px;
  line-height: 11.300px;
  white-space: nowrap;
  color: #444;
}

.q b {
  font-weight: 400;
  font-size: 10px;
  color: #999;
}

.mm-label {
  display: flex;
  align-items: center;
  justify-content: flex-end;
  gap: 5px;
  height: 12px;
  margin-top: 11px;
  font-size: 7px;
  font-weight: 700;
  color: #444;
}

.mm-btn {
  width: 164px;
  height: 26px;
  margin: 5px 0 0 10px;
  border-radius: 6px;
  background: linear-gradient(90deg, #9a55f0, #6f72f8);
  color: #e6dfff;
  font-size: 8.800px;
  line-height: 26px;
  text-align: center;
  white-space: nowrap;
}

.res-head {
  display: flex;
  align-items: center;
  justify-content: space-between;
  height: 14px;
  margin-top: 12px;
  padding-right: 5px;
  font-family: "Liberation Sans", sans-serif;
  font-size: 7.500px;
  font-weight: 700;
}

.res {
  display: flex;
  flex-direction: column;
  align-items: center;
  width: 174px;
  height: 189px;
  margin-top: 5px;
  border-radius: 6px;
  background: #fff;
}

.mm-thumb {
  margin-top: 72px;
}

.res-icons {
  display: flex;
  align-items: center;
  gap: 9.500px;
  margin: auto 0 11px 6px;
}

.res-sep {
  width: 1px;
  height: 10px;
  margin: 0 -3px;
  background: #e4e4e4;
}

.chips {
  display: flex;
  gap: 6px;
  margin-top: 22px;
}

.chip {
  display: flex;
  align-items: center;
  justify-content: center;
  width: 22px;
  height: 22px;
  border-radius: 6px;
  background: #fff;
}

.ask {
  width: 174px;
  height: 54px;
  margin-top: 7px;
  padding: 7px 5px 0;
  border-radius: 6px;
  background: #fff;
}

.ask-ph {
  height: 14px;
  font-size: 9px;
  line-height: 14px;
  color: #aaa;
}

.ask-bar {
  display: flex;
  align-items: center;
  margin-top: 9px;
}

.bulb {
  display: flex;
  align-items: center;
  justify-content: center;
  width: 18px;
  height: 18px;
  border-radius: 3px;
  background: #eef1f9;
}

.ask-img { margin-left: auto; }
.ask-crop { margin-left: 12px; }
.ask-send { margin: 0 3px 0 13px; }

/* right rail */
.rrail {
  display: flex;
  flex-direction: column;
  align-items: center;
  flex: 1;
  padding-top: 3px;
  border-radius: 0 14px 0 0;
  background: #ededed;
}

.rr {
  flex: none;
  height: 30px;
}

.ocr {
  font-family: "Liberation Sans", sans-serif;
  font-size: 4px;
  font-weight: 700;
  fill: #444;
  stroke: none;
}

.rr-sep {
  flex: none;
  width: 8px;
  height: 1px;
  margin: 5.500px 0;
  background: #d4d4d4;
}

.rr-bottom {
  display: flex;
  flex-direction: column;
  align-items: center;
  gap: 12px;
  margin-top: auto;
  padding-bottom: 10px;
}

.rr-logo {
  display: flex;
  align-items: center;
  justify-content: center;
  width: 18px;
  height: 18px;
  border-radius: 3px;
  background: #fff;
}
```
